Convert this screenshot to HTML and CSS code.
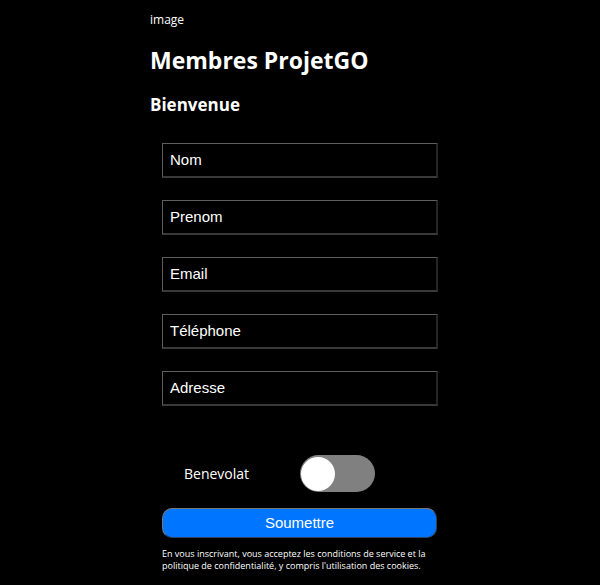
FILE: index.html
```html
<!DOCTYPE html>
<html lang="fr">
<head>
<meta charset="utf-8">
<meta name="viewport" content="width=device-width, initial-scale=1">
<title>Membres ProjetGO</title>
<link rel="stylesheet" href="styles.css">
</head>
<body>
<main class="page">
  <p class="logo">image</p>
  <h1 class="title">Membres ProjetGO</h1>
  <h2 class="subtitle">Bienvenue</h2>
  <form class="form">
    <input class="field" type="text" name="nom" placeholder="Nom" aria-label="Nom">
    <input class="field" type="text" name="prenom" placeholder="Prenom" aria-label="Prenom">
    <input class="field" type="email" name="email" placeholder="Email" aria-label="Email">
    <input class="field" type="tel" name="telephone" placeholder="Téléphone" aria-label="Téléphone">
    <input class="field" type="text" name="adresse" placeholder="Adresse" aria-label="Adresse">
    <div class="option">
      <label class="option-label" for="benevolat">Benevolat</label>
      <input class="switch" type="checkbox" id="benevolat" name="benevolat">
    </div>
    <button class="submit" type="submit">Soumettre</button>
    <p class="terms">En vous inscrivant, vous acceptez les conditions de service et la politique de confidentialité, y compris l'utilisation des cookies.</p>
  </form>
</main>
</body>
</html>
```
FILE: styles.css
```css
* {
  box-sizing: border-box;
}

body {
  margin: 0;
  background: #000;
  color: #fff;
  font-family: "Segoe UI", "Open Sans", "Noto Sans", sans-serif;
}

.page {
  width: 50%;
  margin: 0 auto;
  padding-top: 12px;
}

.logo {
  margin: 0;
  font-size: 12px;
  line-height: 16px;
}

.title {
  margin: 16px 0 0;
  font-size: 23px;
  line-height: 32px;
  white-space: nowrap;
}

.subtitle {
  margin: 17px 0 0;
  font-size: 17px;
  line-height: 24px;
}

.form {
  display: flex;
  flex-direction: column;
  margin: 26px 12px 0;
}

.field {
  width: 100%;
  height: 35px;
  margin: 0 0 22px;
  padding: 0 7px 2px;
  border: solid;
  border-width: 1px 2px 2px 1px;
  border-color: #5e5e5e #262626 #3a3a3a #5e5e5e;
  border-radius: 0;
  background: #000;
  color: #fff;
  font: 15px "Liberation Sans", Arial, sans-serif;
}

.field::placeholder {
  color: #fff;
  opacity: 1;
}

.option {
  display: grid;
  grid-template-columns: 1fr 1fr;
  align-items: center;
  margin-top: 27px;
}

.option-label {
  padding-left: 22px;
  font-size: 14px;
  line-height: 20px;
}

.switch {
  appearance: none;
  display: flex;
  align-items: center;
  width: 75px;
  height: 37px;
  margin: 0;
  padding: 1px;
  border-radius: 19px;
  background: #808080;
}

.switch::before {
  content: "";
  width: 34px;
  height: 34px;
  border-radius: 50%;
  background: #fff;
}

.switch:checked {
  background: #0075ff;
}

.switch:checked::before {
  margin-left: auto;
}

.submit {
  height: 30px;
  margin: 16px 1px 0 0;
  padding: 0 0 2px;
  border: 1px solid;
  border-color: #767676 #30415c #30415c #767676;
  border-radius: 10px;
  background: #0075ff;
  color: #fff;
  font: 15px "Liberation Sans", Arial, sans-serif;
}

.terms {
  margin: 10px 0 0;
  font-size: 9px;
  line-height: 12px;
}
```
